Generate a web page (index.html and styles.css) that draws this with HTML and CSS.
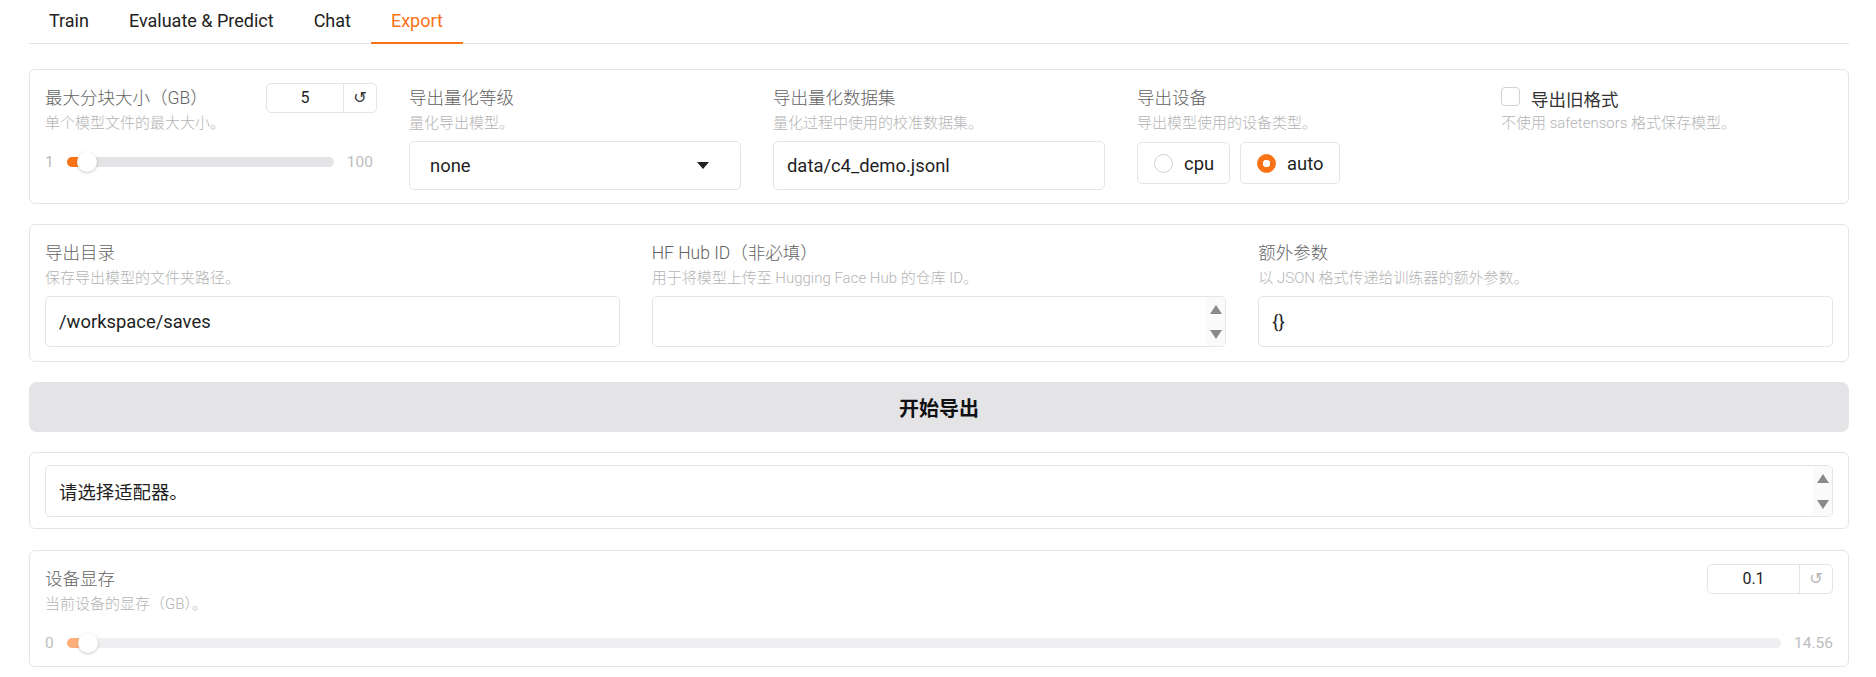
FILE: index.html
```html
<!DOCTYPE html>
<html lang="zh-CN">
<head>
<meta charset="utf-8">
<title>Export</title>
<link rel="stylesheet" href="styles.css">
</head>
<body>
<div class="app">
  <nav class="tabs">
    <button class="tab">Train</button>
    <button class="tab">Evaluate &amp; Predict</button>
    <button class="tab">Chat</button>
    <button class="tab active">Export</button>
  </nav>

  <main class="panel">
    <section class="card grid5">
      <div class="field">
        <div class="field-head">
          <span class="label">最大分块大小（GB）</span>
          <div class="num num-sm">
            <span class="num-val">5</span>
            <span class="num-reset">↺</span>
          </div>
        </div>
        <div class="desc">单个模型文件的最大大小。</div>
        <div class="slider">
          <span class="bound">1</span>
          <div class="track" style="--pct: 0.0404">
            <div class="fill"></div>
            <div class="thumb"></div>
          </div>
          <span class="bound">100</span>
        </div>
      </div>

      <div class="field">
        <div class="field-head"><span class="label">导出量化等级</span></div>
        <div class="desc">量化导出模型。</div>
        <div class="input select">
          <span>none</span>
          <svg class="caret" width="12" height="7" viewBox="0 0 12 7"><path d="M0 0h12L6 7z" fill="#222"/></svg>
        </div>
      </div>

      <div class="field">
        <div class="field-head"><span class="label">导出量化数据集</span></div>
        <div class="desc">量化过程中使用的校准数据集。</div>
        <div class="input">data/c4_demo.jsonl</div>
      </div>

      <div class="field">
        <div class="field-head"><span class="label">导出设备</span></div>
        <div class="desc">导出模型使用的设备类型。</div>
        <div class="radios">
          <label class="radio"><span class="dot"></span>cpu</label>
          <label class="radio"><span class="dot on"></span>auto</label>
        </div>
      </div>

      <div class="field">
        <div class="check-row"><span class="box"></span><span class="check-label">导出旧格式</span></div>
        <div class="desc">不使用 safetensors 格式保存模型。</div>
      </div>
    </section>

    <section class="card grid3">
      <div class="field">
        <div class="field-head"><span class="label">导出目录</span></div>
        <div class="desc">保存导出模型的文件夹路径。</div>
        <div class="input tall">/workspace/saves</div>
      </div>
      <div class="field">
        <div class="field-head"><span class="label">HF Hub ID（非必填）</span></div>
        <div class="desc">用于将模型上传至 Hugging Face Hub 的仓库 ID。</div>
        <div class="input tall area">
          <span class="area-text"></span>
          <span class="scrollbar">
            <svg width="12" height="9" viewBox="0 0 12 9"><path d="M6 0l6 9H0z" fill="#8a8a8a"/></svg>
            <svg width="12" height="9" viewBox="0 0 12 9"><path d="M0 0h12L6 9z" fill="#8a8a8a"/></svg>
          </span>
        </div>
      </div>
      <div class="field">
        <div class="field-head"><span class="label">额外参数</span></div>
        <div class="desc">以 JSON 格式传递给训练器的额外参数。</div>
        <div class="input tall">{}</div>
      </div>
    </section>

    <button class="primary">开始导出</button>

    <section class="card output">
      <div class="input area status">
        <span class="area-text">请选择适配器。</span>
        <span class="scrollbar">
          <svg width="12" height="9" viewBox="0 0 12 9"><path d="M6 0l6 9H0z" fill="#8a8a8a"/></svg>
          <svg width="12" height="9" viewBox="0 0 12 9"><path d="M0 0h12L6 9z" fill="#8a8a8a"/></svg>
        </span>
      </div>
    </section>

    <section class="card memory">
      <div class="field">
        <div class="field-head">
          <span class="label">设备显存</span>
          <div class="num num-lg muted">
            <span class="num-val">0.1</span>
            <span class="num-reset">↺</span>
          </div>
        </div>
        <div class="desc">当前设备的显存（GB）。</div>
        <div class="slider disabled">
          <span class="bound">0</span>
          <div class="track" style="--pct: 0.0069">
            <div class="fill"></div>
            <div class="thumb"></div>
          </div>
          <span class="bound">14.56</span>
        </div>
      </div>
    </section>
  </main>
</div>
</body>
</html>
```

FILE: styles.css
```css
* {
  box-sizing: border-box;
}

body {
  margin: 0;
  background: #ffffff;
  color: #1f1f1f;
  font-family: Roboto, "Noto Sans CJK SC", sans-serif;
}

.app {
  width: 1820px;
  margin-left: 29px;
}

/* tab strip */
.tabs {
  display: flex;
  height: 44px;
  border-bottom: 1px solid #e5e5e5;
}

.tab {
  height: 44px;
  margin-bottom: -1px;
  padding: 0 20px 2px;
  border: none;
  border-bottom: 2px solid transparent;
  background: none;
  font-family: inherit;
  font-size: 18px;
  color: #222;
}

.tab.active {
  color: #f97316;
  border-bottom-color: #f97316;
}

/* main column */
.panel {
  display: flex;
  flex-direction: column;
  gap: 20px;
  padding-top: 25px;
}

.card {
  border: 1px solid #e5e5e5;
  border-radius: 6px;
  padding: 13px 15px 13px;
}

.grid5 {
  display: grid;
  grid-template-columns: repeat(5, 1fr);
  gap: 32px;
}

.grid3 {
  display: grid;
  grid-template-columns: repeat(3, 1fr);
  gap: 32px;
  padding-bottom: 14px;
}

.field {
  display: flex;
  flex-direction: column;
  min-width: 0;
}

.field-head {
  display: flex;
  justify-content: space-between;
  align-items: center;
  height: 30px;
}

.label {
  font-size: 17.5px;
  font-weight: 300;
  line-height: 30px;
  color: #626262;
  white-space: nowrap;
}

.desc {
  font-size: 15px;
  font-weight: 300;
  line-height: 20px;
  color: #b4b4b4;
  white-space: nowrap;
}

/* text inputs */
.input {
  display: flex;
  align-items: center;
  height: 49px;
  margin-top: 8px;
  padding: 0 13px;
  border: 1px solid #e5e5e5;
  border-radius: 5px;
  font-size: 18.4px;
  color: #1f1f1f;
}

.input.tall {
  height: 51px;
}

.select {
  justify-content: space-between;
  padding: 0 31px 0 20px;
}

.area {
  align-items: stretch;
  padding-right: 0;
  overflow: hidden;
}

.area-text {
  flex: 1;
  display: flex;
  align-items: center;
}

.scrollbar {
  width: 19px;
  display: flex;
  flex-direction: column;
  justify-content: space-between;
  align-items: center;
  padding: 8px 0 7px;
  background: #fafafa;
}

/* number box with reset */
.num {
  display: flex;
  height: 30px;
  border: 1px solid #e5e5e5;
  border-radius: 5px;
  font-size: 16px;
}

.num-sm {
  width: 111px;
}

.num-lg {
  width: 126px;
}

.num-val {
  flex: 1;
  text-align: center;
  line-height: 28px;
  color: #1f1f1f;
}

.num-reset {
  width: 33px;
  border-left: 1px solid #e5e5e5;
  text-align: center;
  line-height: 28px;
  font-family: "DejaVu Sans", sans-serif;
  font-size: 16px;
  color: #333;
}

.num.muted .num-reset {
  color: #b5b5b5;
}

/* sliders */
.slider {
  display: flex;
  align-items: center;
  gap: 13px;
  height: 24px;
  margin-top: 17px;
  padding-right: 4px;
  font-size: 15.5px;
  color: #bdbdbd;
}

.track {
  position: relative;
  flex: 1;
  height: 10px;
  border-radius: 5px;
  background: #e4e4e7;
}

.fill {
  position: absolute;
  left: 0;
  top: 0;
  bottom: 0;
  width: calc(10px + (100% - 20px) * var(--pct));
  border-radius: 5px;
  background: #f97316;
}

.thumb {
  position: absolute;
  top: 50%;
  left: calc(10px + (100% - 20px) * var(--pct));
  width: 20px;
  height: 20px;
  border-radius: 50%;
  background: #fff;
  box-shadow: 0 1px 3px rgba(0, 0, 0, 0.22);
  transform: translate(-50%, -50%);
}

.slider.disabled {
  padding-right: 0;
}

.slider.disabled .track {
  background: #efeff1;
}

.slider.disabled .fill {
  background: #fdae7a;
}

/* radio group */
.radios {
  display: flex;
  gap: 10px;
  margin-top: 9px;
}

.radio {
  display: flex;
  align-items: center;
  gap: 11px;
  height: 42px;
  padding: 0 15px 0 16px;
  border: 1px solid #e5e5e5;
  border-radius: 5px;
  font-size: 18.4px;
  color: #1f1f1f;
}

.dot {
  width: 19px;
  height: 19px;
  border: 1px solid #d0d0d0;
  border-radius: 50%;
}

.dot.on {
  border-color: #f97316;
  background: radial-gradient(circle, #fff 0 3.5px, #f97316 4px);
}

/* checkbox */
.check-row {
  display: flex;
  align-items: center;
  gap: 11px;
  height: 30px;
}

.box {
  width: 19px;
  height: 19px;
  margin-top: -3px;
  border: 1px solid #d0d0d0;
  border-radius: 4px;
}

.check-label {
  font-size: 17.5px;
  color: #333;
}

/* action button */
.primary {
  height: 50px;
  border: none;
  border-radius: 8px;
  background: #e4e4e7;
  font-family: inherit;
  font-size: 20px;
  font-weight: 700;
  color: #111;
}

/* status output */
.output {
  padding: 12px 15px 11px;
}

.status {
  height: 52px;
  margin-top: 0;
}

.memory {
  margin-top: 1px;
  padding-bottom: 11px;
}
```
